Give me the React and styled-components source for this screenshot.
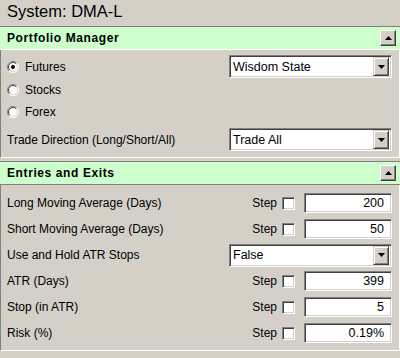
import styled, { createGlobalStyle } from 'styled-components';

const GlobalStyle = createGlobalStyle`
    html, body {
        margin: 0;
        padding: 0;
        background: #d4d0c8;
    }
    body {
        font-family: "Liberation Sans", Arial, sans-serif;
        font-size: 12px;
        color: #000;
    }
`;

const Page = styled.div`
    width: 400px;
    height: 358px;
    background: #d4d0c8;
    overflow: hidden;
`;

const Title = styled.div`
    height: 22px;
    line-height: 22px;
    padding: 0 0 4px 7px;
    font-size: 16.5px;
`;

const Section = styled.div`
    margin-top: ${(p) => (p.first ? 0 : 3)}px;
`;

const Header = styled.div`
    display: flex;
    align-items: center;
    justify-content: space-between;
    height: 22px;
    padding: 0 4px 0 7px;
    background: #ccffcc;
    border-top: 1px solid #808080;
    border-bottom: 1px solid ${(p) => (p.edge === 'dark' ? '#808080' : '#ffffff')};
    font-weight: bold;
    font-size: 12px;
    letter-spacing: 0.6px;
`;

const CollapseButton = styled.div`
    width: 14px;
    height: 14px;
    display: flex;
    align-items: center;
    justify-content: center;
    background: #d4d0c8;
    border: 1px solid;
    border-color: #ffffff #404040 #404040 #ffffff;
    box-shadow: inset -1px -1px #808080;
`;

const Body = styled.div`
    padding: 5px 6px ${(p) => p.bottom}px 6px;
    border-left: 1px solid #808080;
    border-right: 1px solid #ffffff;
    border-bottom: 1px solid #ffffff;
`;

const Row = styled.div`
    display: flex;
    align-items: center;
    justify-content: space-between;
    height: ${(p) => p.h}px;
    margin-top: ${(p) => p.gap || 0}px;
`;

const RadioLabel = styled.label`
    display: flex;
    align-items: center;
    gap: 6px;
`;

const Label = styled.span`
    white-space: nowrap;
`;

const Select = styled.div`
    box-sizing: border-box;
    width: 163px;
    height: 23px;
    display: flex;
    align-items: center;
    background: #fff;
    border: 1px solid;
    border-color: #808080 #ffffff #ffffff #808080;
    box-shadow: inset 1px 1px #404040, inset -1px -1px #d4d0c8;
    padding: 1px 2px 1px 1px;
    margin-right: 1px;
`;

const SelectText = styled.span`
    flex: 1;
    padding-left: 2px;
    font-size: 12.5px;
`;

const ArrowButton = styled.div`
    box-sizing: border-box;
    width: 16px;
    height: 19px;
    display: flex;
    align-items: center;
    justify-content: center;
    background: #d4d0c8;
    border: 1px solid;
    border-color: #d4d0c8 #404040 #404040 #d4d0c8;
    box-shadow: inset 1px 1px #ffffff, inset -1px -1px #808080;
`;

const Controls = styled.div`
    display: flex;
    align-items: center;
`;

const StepText = styled.span`
    margin-right: 5px;
`;

const Check = styled.span`
    box-sizing: border-box;
    width: 13px;
    height: 13px;
    background: #fff;
    border: 1px solid;
    border-color: #808080 #ffffff #ffffff #808080;
    box-shadow: inset 1px 1px #404040, inset -1px -1px #d4d0c8;
    margin-right: 9px;
`;

const NumberBox = styled.div`
    box-sizing: border-box;
    width: 88px;
    height: 20px;
    display: flex;
    align-items: center;
    justify-content: flex-end;
    padding-right: 7px;
    background: #fff;
    border: 1px solid;
    border-color: #808080 #ffffff #ffffff #808080;
    box-shadow: inset 1px 1px #404040, inset -1px -1px #d4d0c8;
    margin-right: 1px;
    font-size: 12.5px;
`;

const Radio = ({ checked }) => (
    <svg width="12" height="12" viewBox="0 0 12 12">
        <circle cx="6" cy="6" r="5.5" fill="#fff" />
        <path d="M2.1 9.9 A5.5 5.5 0 0 1 9.9 2.1" stroke="#808080" fill="none" />
        <path d="M9.9 2.1 A5.5 5.5 0 0 1 2.1 9.9" stroke="#ffffff" fill="none" />
        <path d="M2.8 9.2 A4.5 4.5 0 0 1 9.2 2.8" stroke="#404040" fill="none" />
        <path d="M9.2 2.8 A4.5 4.5 0 0 1 2.8 9.2" stroke="#d4d0c8" fill="none" />
        {checked && <circle cx="6" cy="6" r="2" fill="#000" />}
    </svg>
);

const TriDown = () => (
    <svg width="7" height="4" viewBox="0 0 7 4">
        <path d="M0 0 H7 L3.5 4 Z" fill="#000" />
    </svg>
);

const TriUp = () => (
    <svg width="7" height="4" viewBox="0 0 7 4">
        <path d="M0 4 H7 L3.5 0 Z" fill="#000" />
    </svg>
);

const Dropdown = ({ value }) => (
    <Select>
        <SelectText>{value}</SelectText>
        <ArrowButton>
            <TriDown />
        </ArrowButton>
    </Select>
);

const StepField = ({ value }) => (
    <Controls>
        <StepText>Step</StepText>
        <Check />
        <NumberBox>{value}</NumberBox>
    </Controls>
);

const entries = [
    { label: 'Long Moving Average (Days)', value: '200' },
    { label: 'Short Moving Average (Days)', value: '50' },
    { label: 'Use and Hold ATR Stops', select: 'False' },
    { label: 'ATR (Days)', value: '399' },
    { label: 'Stop (in ATR)', value: '5' },
    { label: 'Risk (%)', value: '0.19%' },
];

const App = () => {
    return (
        <Page>
            <GlobalStyle />
            <Title>System: DMA-L</Title>

            <Section first>
                <Header>
                    Portfolio Manager
                    <CollapseButton>
                        <TriUp />
                    </CollapseButton>
                </Header>
                <Body bottom={6}>
                    <Row h={23}>
                        <RadioLabel>
                            <Radio checked />
                            Futures
                        </RadioLabel>
                        <Dropdown value="Wisdom State" />
                    </Row>
                    <Row h={23}>
                        <RadioLabel>
                            <Radio />
                            Stocks
                        </RadioLabel>
                    </Row>
                    <Row h={22}>
                        <RadioLabel>
                            <Radio />
                            Forex
                        </RadioLabel>
                    </Row>
                    <Row h={23} gap={5}>
                        <Label>Trade Direction (Long/Short/All)</Label>
                        <Dropdown value="Trade All" />
                    </Row>
                </Body>
            </Section>

            <Section>
                <Header edge="dark">
                    Entries and Exits
                    <CollapseButton>
                        <TriUp />
                    </CollapseButton>
                </Header>
                <Body bottom={4}>
                    {entries.map((e) => (
                        <Row h={26} key={e.label}>
                            <Label>{e.label}</Label>
                            {e.select ? <Dropdown value={e.select} /> : <StepField value={e.value} />}
                        </Row>
                    ))}
                </Body>
            </Section>
        </Page>
    );
};

export default App;
